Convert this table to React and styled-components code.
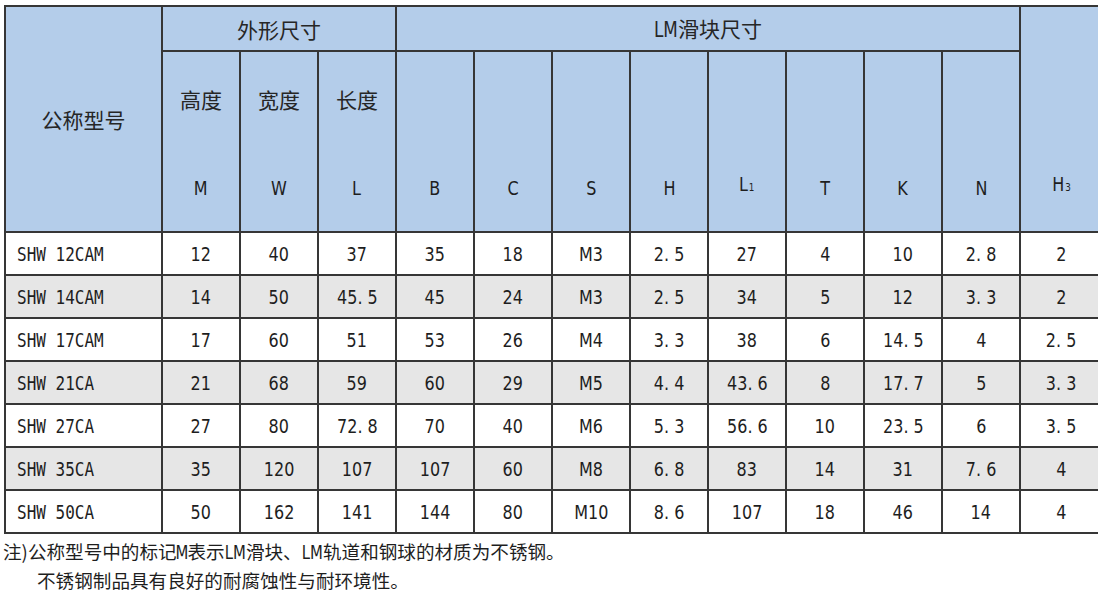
import React from 'react';
import styled, { createGlobalStyle } from 'styled-components';

const GlobalStyle = createGlobalStyle`
  html, body {
    margin: 0;
    padding: 0;
    background: #ffffff;
    overflow: hidden;
  }
  body {
    font-family: "DejaVu Sans", "Noto Sans CJK SC", sans-serif;
    color: #1e1e1e;
  }
`;

const columns = [
  { key: 'M', label: '高度' },
  { key: 'W', label: '宽度' },
  { key: 'L', label: '长度' },
  { key: 'B' },
  { key: 'C' },
  { key: 'S' },
  { key: 'H' },
  { key: 'L', sub: '1' },
  { key: 'T' },
  { key: 'K' },
  { key: 'N' },
];

const rows = [
  ['SHW 12CAM', '12', '40', '37', '35', '18', 'M3', '2. 5', '27', '4', '10', '2. 8', '2'],
  ['SHW 14CAM', '14', '50', '45. 5', '45', '24', 'M3', '2. 5', '34', '5', '12', '3. 3', '2'],
  ['SHW 17CAM', '17', '60', '51', '53', '26', 'M4', '3. 3', '38', '6', '14. 5', '4', '2. 5'],
  ['SHW 21CA', '21', '68', '59', '60', '29', 'M5', '4. 4', '43. 6', '8', '17. 7', '5', '3. 3'],
  ['SHW 27CA', '27', '80', '72. 8', '70', '40', 'M6', '5. 3', '56. 6', '10', '23. 5', '6', '3. 5'],
  ['SHW 35CA', '35', '120', '107', '107', '60', 'M8', '6. 8', '83', '14', '31', '7. 6', '4'],
  ['SHW 50CA', '50', '162', '141', '144', '80', 'M10', '8. 6', '107', '18', '46', '14', '4'],
];

export default function App() {
  return (
    <Page>
      <GlobalStyle />
      <Table>
        <colgroup>
          <col style={{ width: 157 }} />
          {columns.map((c, i) => (
            <col key={i} style={{ width: 78 }} />
          ))}
          <col style={{ width: 82 }} />
        </colgroup>
        <thead>
          <GroupRow>
            <HeadCell rowSpan={2}>
              <ModelTitle>公称型号</ModelTitle>
            </HeadCell>
            <HeadCell colSpan={3}>
              <GroupTitle>外形尺寸</GroupTitle>
            </HeadCell>
            <HeadCell colSpan={8}>
              <GroupTitle>
                <Narrow $tight>LM</Narrow>滑块尺寸
              </GroupTitle>
            </HeadCell>
            <HeadCell rowSpan={2}>
              <TallStack>
                <Symbol>
                  <Narrow>
                    H<Sub>3</Sub>
                  </Narrow>
                </Symbol>
              </TallStack>
            </HeadCell>
          </GroupRow>
          <tr>
            {columns.map((c, i) => (
              <HeadCell key={i}>
                <SubStack>
                  <Label>{c.label || ''}</Label>
                  <Symbol>
                    <Narrow>
                      {c.key}
                      {c.sub && <Sub>{c.sub}</Sub>}
                    </Narrow>
                  </Symbol>
                </SubStack>
              </HeadCell>
            ))}
          </tr>
        </thead>
        <tbody>
          {rows.map((r, i) => (
            <DataRow key={i} $alt={i % 2 === 1}>
              {r.map((v, j) => (
                <DataCell key={j} $first={j === 0}>
                  <Narrow $left={j === 0} $mono={j === 0}>
                    {v}
                  </Narrow>
                </DataCell>
              ))}
            </DataRow>
          ))}
        </tbody>
      </Table>
      <Notes>
        <NoteLine>
          注)公称型号中的标记<Narrow $tight>M</Narrow>表示<Narrow $tight>LM</Narrow>滑块、
          <Narrow $tight>LM</Narrow>轨道和钢球的材质为不锈钢。
        </NoteLine>
        <NoteLine $indent>不锈钢制品具有良好的耐腐蚀性与耐环境性。</NoteLine>
      </Notes>
    </Page>
  );
}

const Page = styled.div`
  padding: 5px 0 0 4px;
  width: 1200px;
`;

const Table = styled.table`
  border-collapse: collapse;
  table-layout: fixed;
  width: 1097px;
`;

const GroupRow = styled.tr`
  height: 45px;
`;

const HeadCell = styled.th`
  background: #b4cdea;
  border: 2px solid #363636;
  padding: 0;
  font-weight: normal;
  text-align: center;
  vertical-align: middle;
`;

const ModelTitle = styled.div`
  font-family: "Noto Sans CJK SC", sans-serif;
  font-size: 21px;
  color: #262626;
`;

const GroupTitle = styled.div`
  font-family: "Noto Sans CJK SC", sans-serif;
  font-size: 21px;
  line-height: 24px;
  color: #262626;
`;

const Narrow = styled.span`
  display: inline-block;
  transform: scaleX(0.8);
  transform-origin: ${(p) => (p.$left ? 'left center' : 'center')};
  margin: 0 ${(p) => (p.$tight ? '-0.14em' : '0')};
  font-family: ${(p) =>
    p.$mono ? '"DejaVu Sans Mono", monospace' : '"DejaVu Sans", sans-serif'};
  white-space: pre;
`;

const SubStack = styled.div`
  height: 178px;
  box-sizing: border-box;
  padding: 34px 0 31px;
  display: flex;
  flex-direction: column;
  justify-content: space-between;
  align-items: center;
`;

const TallStack = styled(SubStack)`
  height: 224px;
  justify-content: flex-end;
`;

const Label = styled.div`
  font-family: "Noto Sans CJK SC", sans-serif;
  font-size: 21px;
  line-height: 24px;
  height: 24px;
  color: #262626;
`;

const Symbol = styled.div`
  font-size: 20px;
  line-height: 24px;
  color: #1e1e1e;
`;

const Sub = styled.span`
  font-size: 11px;
  vertical-align: baseline;
  margin-left: 1px;
`;

const DataRow = styled.tr`
  height: 43px;
  background: ${(p) => (p.$alt ? '#e6e6e6' : '#ffffff')};
`;

const DataCell = styled.td`
  border: 2px solid #363636;
  padding: 0 ${(p) => (p.$first ? '11px' : '0')};
  text-align: ${(p) => (p.$first ? 'left' : 'center')};
  font-size: 20px;
  line-height: 24px;
  color: #1e1e1e;
`;

const Notes = styled.div`
  margin-top: 5px;
  margin-left: -1px;
  display: flex;
  flex-direction: column;
  gap: 3px;
  font-family: "Noto Sans CJK SC", sans-serif;
  font-size: 18.6px;
  line-height: 24px;
  color: #1e1e1e;
`;

const NoteLine = styled.div`
  padding-left: ${(p) => (p.$indent ? '34px' : '0')};
  white-space: nowrap;
`;
